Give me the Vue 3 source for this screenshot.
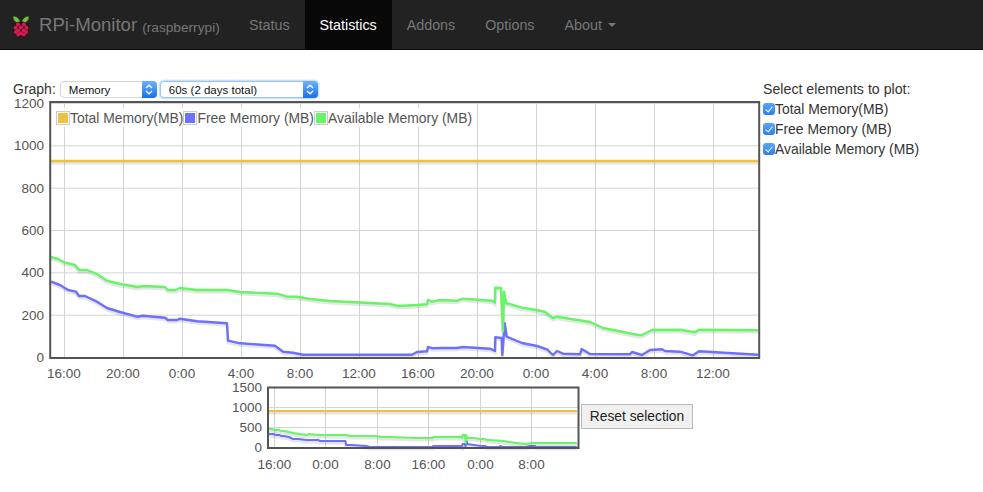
<template>
  <div class="monitor-page">
    <nav class="navbar">
      <a class="brand">
        <svg class="brand-logo" width="18" height="22" viewBox="0 0 18 22">
          <path d="M9 8.5C8 4 4.5 .8 1.2 1.2 .6 5 4 8.8 9 8.5Z" fill="#72bf3f" stroke="#2b3a1e" stroke-width=".5" />
          <path d="M9 8.5C10 4 13.5 .8 16.8 1.2 17.4 5 14 8.8 9 8.5Z" fill="#72bf3f" stroke="#2b3a1e" stroke-width=".5" />
          <path d="M9 6.8C13.6 6.8 16.8 9.5 16.8 13.5 16.8 18 12.8 21.7 9 21.7 5.2 21.7 1.2 18 1.2 13.5 1.2 9.5 4.4 6.8 9 6.8Z" fill="#3a0a1a" stroke="#161616" stroke-width=".6" />
          <circle v-for="dot in berryDots" :key="dot.join()" :cx="dot[0]" :cy="dot[1]" r="2" fill="#d41c52" />
        </svg>
        <span class="brand-name">RPi-Monitor</span>
        <span class="brand-host">(raspberrypi)</span>
      </a>
      <ul class="nav-links">
        <li v-for="link in navLinks" :key="link" :class="{ active: link === 'Statistics' }">
          {{ link }}<span v-if="link === 'About'" class="caret"></span>
        </li>
      </ul>
    </nav>

    <main class="content">
      <section class="graph-column">
        <div class="controls">
          <span class="controls-label">Graph:</span>
          <div class="select-box memory">
            <span>Memory</span>
            <span class="select-arrows">
              <svg width="8" height="11" viewBox="0 0 8 11"><path d="M1 4 4 1.2 7 4M1 7 4 9.8 7 7" /></svg>
            </span>
          </div>
          <div class="select-box period">
            <span>60s (2 days total)</span>
            <span class="select-arrows">
              <svg width="8" height="11" viewBox="0 0 8 11"><path d="M1 4 4 1.2 7 4M1 7 4 9.8 7 7" /></svg>
            </span>
          </div>
        </div>

        <div class="main-plot">
          <svg width="760" height="284" viewBox="0 98 760 284">
            <g class="grid">
              <line v-for="t in mainYTicks" :key="t.label" x1="51" x2="759" :y1="t.y" :y2="t.y" />
              <line v-for="t in mainXTicks" :key="t.x" :x1="t.x" :x2="t.x" y1="103" y2="357" />
            </g>
            <g v-for="s in mainSeries" :key="s.name" fill="none">
              <polyline :points="s.points" class="shadow" />
              <polyline :points="s.points" class="series" :stroke="s.color" />
            </g>
            <rect class="frame" x="50.2" y="102" width="709" height="256" />
            <text v-for="t in mainYTicks" :key="t.label" class="tick" text-anchor="end" x="44" :y="t.y + 4.5">{{ t.label }}</text>
            <text v-for="t in mainXTicks" :key="t.x" class="tick" text-anchor="middle" :x="t.x - 0.5" y="378">{{ t.label }}</text>
          </svg>
          <div class="legend">
            <template v-for="s in series" :key="s.name">
              <span class="swatch"><i :style="{ background: s.color }"></i></span>
              <span class="legend-text">{{ s.name }}</span>
            </template>
          </div>
        </div>

        <div class="overview-row">
          <svg width="350" height="90" viewBox="230 382 350 90">
            <g class="grid">
              <line v-for="t in overviewYTicks" :key="t.label" x1="269" x2="578" :y1="t.y" :y2="t.y" />
              <line v-for="t in overviewXTicks" :key="t.x" :x1="t.x" :x2="t.x" y1="388" y2="447" />
            </g>
            <g v-for="s in overviewSeries" :key="s.name" fill="none">
              <polyline :points="s.points" class="shadow" />
              <polyline :points="s.points" class="series small" :stroke="s.color" />
            </g>
            <rect class="frame" x="268" y="387.5" width="310.5" height="60.5" />
            <text v-for="t in overviewYTicks" :key="t.label" class="tick" text-anchor="end" x="262" :y="t.y + 4.5">{{ t.label }}</text>
            <text v-for="t in overviewXTicks" :key="t.x" class="tick" text-anchor="middle" :x="t.x" y="469">{{ t.label }}</text>
          </svg>
          <button class="reset-btn" type="button">Reset selection</button>
        </div>
      </section>

      <aside class="picker">
        <div class="picker-title">Select elements to plot:</div>
        <label v-for="s in series" :key="s.name" class="picker-row">
          <input type="checkbox" checked />{{ s.name }}
        </label>
      </aside>
    </main>
  </div>
</template>

<script setup>
const navLinks = ['Status', 'Statistics', 'Addons', 'Options', 'About'];

const berryDots = [
  [6, 9.6], [12, 9.6], [3.5, 12.8], [9, 12.4], [14.5, 12.8],
  [6.2, 15.5], [11.8, 15.5], [3.9, 17], [14.1, 17], [9, 18.3], [6.3, 19.6], [11.7, 19.6]
];

// traced from the plot, page coordinates
const green = [
  [51, 257], [58, 259], [65, 262.7], [75, 265], [79, 270], [87, 270], [97, 274], [107, 280.7], [120, 284],
  [138, 287], [143, 286], [165, 287], [168, 290], [175, 290], [180, 288], [197, 290], [227, 290], [240, 292],
  [277, 293.7], [287, 296.7], [297, 296.7], [310, 299], [330, 301], [390, 304], [398, 306], [417, 305],
  [427, 304.3], [428, 299.7], [432, 301.7], [440, 300], [457, 300.7], [463, 298.7], [492, 300.7], [495, 302.7],
  [495.3, 287.7], [501, 288], [503, 331.7], [504, 291.7], [506, 303], [522, 307.7], [537, 310], [545, 312],
  [553, 318], [557, 316.7], [590, 322], [603, 328], [637, 334.7], [642, 335], [652, 330], [680, 329.7],
  [695, 332.3], [699, 329.7], [758, 330.3]
];
const blue = [
  [51, 281.7], [60, 285], [68, 290], [76, 291.7], [79, 296], [85, 296], [97, 301.7], [107, 308], [120, 312],
  [137, 316.7], [143, 315.7], [165, 317.7], [168, 320], [177, 320], [180, 318.7], [197, 321.3], [227, 323.3],
  [228, 340.7], [240, 343.3], [275, 345.7], [283, 351.7], [293, 352.7], [303, 354.7], [412, 354.7], [417, 352],
  [427, 351.3], [428, 347], [433, 348.3], [442, 348], [457, 348], [463, 347], [490, 348.7], [495, 351],
  [495.3, 337.3], [501.7, 338], [502.3, 355], [504.7, 323.3], [506.7, 336.7], [522, 343], [537, 346], [547, 349.3],
  [553, 355], [557, 351], [563, 353.7], [580, 354.3], [581.7, 349], [590, 354], [630, 354.3], [632, 352],
  [642, 355], [650, 350], [662, 349.3], [665, 351], [680, 351.7], [693, 355.3], [699, 351.3], [758, 354.7]
];
const gold = [[51, 161], [758, 161]];

const series = [
  { name: 'Total Memory(MB)', color: '#edc240', data: gold },
  { name: 'Free Memory (MB)', color: '#6f6fff', data: blue },
  { name: 'Available Memory (MB)', color: '#66f566', data: green }
];

const toPoints = (data) => data.map((p) => p.join(',')).join(' ');

// the overview is the same data on a smaller scale
const toOverview = ([x, y]) => [
  (274.3 + (x - 63.5) * 0.4356).toFixed(1),
  Math.round(447.8 - (357 - y) * 0.189)
];

const mainSeries = series.map((s) => ({ ...s, points: toPoints(s.data) }));
const overviewSeries = series.map((s) => ({ ...s, points: toPoints(s.data.map(toOverview)) }));

const mainYTicks = ['0', '200', '400', '600', '800', '1000', '1200'].map((label, i) => ({
  label,
  y: i === 6 ? 103.5 : 357.5 - i * 42.33
}));
const mainXTicks = ['16:00', '20:00', '0:00', '4:00', '8:00', '12:00', '16:00', '20:00', '0:00', '4:00', '8:00', '12:00'].map(
  (label, i) => ({ label, x: Math.round(63.5 + i * 59.02) + 0.5 })
);
const overviewYTicks = ['0', '500', '1000', '1500'].map((label, i) => ({ label, y: 447.5 - i * 20 }));
const overviewXTicks = ['16:00', '0:00', '8:00', '16:00', '0:00', '8:00'].map((label, i) => ({
  label,
  x: Math.round(274 + i * 51.4) + 0.5
}));
</script>

<style scoped>
.monitor-page {
  font-family: "Liberation Sans", Arial, sans-serif;
  color: #333;
  background: #fff;
  height: 492px;
  overflow: hidden;
}

.navbar {
  display: flex;
  align-items: stretch;
  height: 49px;
  background: #222;
  border-bottom: 1px solid #080808;
}

.brand {
  display: flex;
  align-items: center;
  width: 234px;
  padding-left: 12px;
  box-sizing: border-box;
  color: #777;
}

.brand-logo {
  margin-top: 2px;
  flex-shrink: 0;
}

.brand-name {
  margin-left: 9px;
  font-size: 18.6px;
}

.brand-host {
  margin-left: 5px;
  margin-top: 6px;
  font-size: 13.7px;
}

.nav-links {
  display: flex;
  list-style: none;
  margin: 0;
  padding: 0;
}

.nav-links li {
  display: flex;
  align-items: center;
  padding: 0 15px;
  font-size: 14.3px;
  color: #777;
}

.nav-links li.active {
  background: #080808;
  color: #fff;
}

.caret {
  width: 0;
  height: 0;
  margin-left: 6px;
  border-top: 4px solid #777;
  border-left: 4px solid transparent;
  border-right: 4px solid transparent;
}

.content {
  display: flex;
  gap: 3px;
}

.graph-column {
  width: 760px;
  flex-shrink: 0;
}

.controls {
  display: flex;
  align-items: flex-end;
  gap: 3px;
  height: 18px;
  margin-top: 30px;
  padding-left: 13px;
}

.controls-label {
  font-size: 14px;
  line-height: 18px;
  margin-right: 1px;
}

.select-box {
  display: flex;
  justify-content: space-between;
  align-items: center;
  box-sizing: border-box;
  height: 17px;
  padding-left: 8px;
  background: #fff;
  border: 1px solid #d4d4d4;
  border-radius: 4px;
  font-size: 11.5px;
  color: #111;
}

.select-box.memory {
  width: 97px;
}

.select-box.period {
  width: 158px;
  border-color: #9ec5f2;
  box-shadow: 0 0 2px 1px #b5d4f8;
}

.select-arrows {
  display: flex;
  align-items: center;
  justify-content: center;
  width: 15px;
  height: 17px;
  margin-right: -1px;
  border-radius: 0 4px 4px 0;
  background: linear-gradient(#6db3fb, #1b6fe6);
}

.select-arrows path {
  fill: none;
  stroke: #fff;
  stroke-width: 1.3;
}

.main-plot {
  position: relative;
  height: 284px;
}

.main-plot svg,
.overview-row svg {
  display: block;
  overflow: visible;
}

.grid line {
  stroke: #d4d4d4;
  stroke-width: 1;
}

.series {
  stroke-width: 2.4;
  stroke-linejoin: round;
}

.series.small {
  stroke-width: 2;
}

.shadow {
  stroke: rgba(0, 0, 0, 0.1);
  stroke-width: 3;
  transform: translateY(2px);
}

.frame {
  fill: none;
  stroke: #545454;
  stroke-width: 2;
}

.tick {
  font-size: 13.5px;
  fill: #545454;
}

.legend {
  position: absolute;
  left: 56px;
  top: 10px;
  display: flex;
  align-items: center;
  height: 19px;
  padding-right: 2px;
  background: rgba(255, 255, 255, 0.85);
  font-size: 13.9px;
  color: #545454;
}

.swatch {
  display: block;
  box-sizing: border-box;
  width: 14px;
  height: 14px;
  padding: 1px;
  border: 1px solid #ccc;
}

.swatch i {
  display: block;
  width: 100%;
  height: 100%;
}

.overview-row {
  display: flex;
  align-items: flex-start;
  padding-left: 230px;
}

.reset-btn {
  width: 112px;
  height: 25px;
  margin: 22px 0 0 1px;
  padding: 0;
  background: #f0f0f0;
  border: 1px solid #b9b9b9;
  border-radius: 0;
  font-family: inherit;
  font-size: 13.8px;
  color: #222;
}

.picker {
  padding-top: 30px;
  font-size: 13.9px;
  color: #333;
}

.picker-title {
  height: 18px;
  line-height: 18px;
  margin-bottom: 1px;
  font-size: 14.2px;
}

.picker-row {
  display: flex;
  align-items: center;
  height: 20px;
}

.picker-row input {
  position: relative;
  flex-shrink: 0;
  appearance: none;
  width: 12px;
  height: 12px;
  margin: 0;
  border-radius: 3px;
  background: linear-gradient(#5aa5f8, #2d7ff0);
}

.picker-row input::after {
  content: '';
  position: absolute;
  left: 4px;
  top: 1.5px;
  width: 3px;
  height: 6px;
  border: solid #fff;
  border-width: 0 1.6px 1.6px 0;
  transform: rotate(40deg);
}
</style>
